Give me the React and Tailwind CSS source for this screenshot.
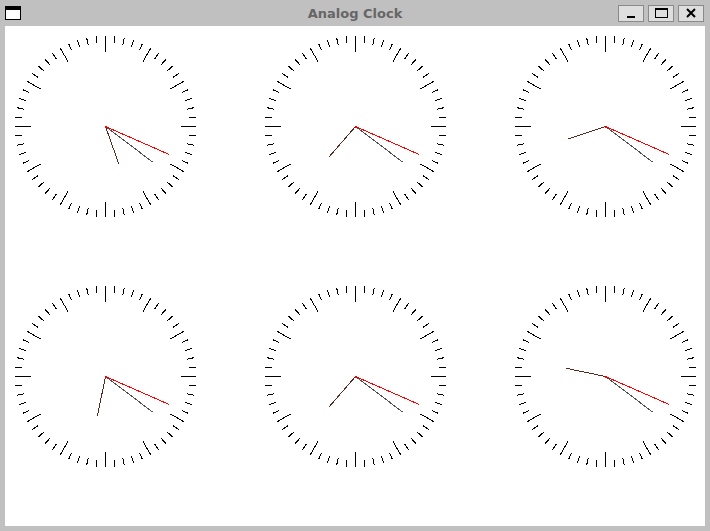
import React from "react";

const HOUR_ANGLES = [160.4, 221, 251.7, 191.6, 221, 281.8];

const C = 100.5;

function point(angle, r) {
  const rad = (angle * Math.PI) / 180;
  return [C + r * Math.sin(rad), C - r * Math.cos(rad)];
}

function Hand({ angle, length, color }) {
  const [x, y] = point(angle, length);
  return <line x1={C} y1={C} x2={x} y2={y} stroke={color} strokeWidth="1" />;
}

function Clock({ hour }) {
  const ticks = [];
  for (let i = 0; i < 60; i++) {
    const major = i % 5 === 0;
    const [x1, y1] = point(i * 6, major ? 75 : 83.5);
    const [x2, y2] = point(i * 6, 90.5);
    ticks.push(
      <line key={i} x1={x1} y1={y1} x2={x2} y2={y2} stroke="#000" strokeWidth="1" />
    );
  }
  return (
    <svg width="200" height="200" viewBox="0 0 200 200" shapeRendering="crispEdges">
      {ticks}
      <Hand angle={hour} length={40} color="#55291f" />
      <Hand angle={127} length={59} color="#505050" />
      <Hand angle={113.7} length={69} color="#ff0000" />
      <rect x="99.5" y="99.5" width="2" height="2" fill="#ff0000" />
    </svg>
  );
}

function TitleButton({ children }) {
  return (
    <div className="w-[26px] h-[17px] bg-[#dedede] border border-[#8a8a8a] flex items-center justify-center">
      {children}
    </div>
  );
}

export default function App() {
  return (
    <div className="w-[710px] h-[531px] bg-[#c0c0c0] flex flex-col" style={{ fontFamily: "'DejaVu Sans', sans-serif" }}>
      {/* Title bar */}
      <div className="h-[26px] grid grid-cols-[1fr_auto_1fr] items-center">
        <div className="pl-[5px] flex items-center">
          <div className="w-[16px] h-[14px] border border-black border-t-[4px] bg-white" />
        </div>
        <div className="text-[13px] font-bold text-[#666666] leading-none">Analog Clock</div>
        <div className="flex justify-end gap-[4px] pr-[6px]">
          <TitleButton>
            <div className="w-[8px] h-[2px] bg-black mt-[8px]" />
          </TitleButton>
          <TitleButton>
            <div className="w-[13px] h-[10px] border border-black border-t-[2px]" />
          </TitleButton>
          <TitleButton>
            <svg width="10" height="10" viewBox="0 0 10 10">
              <path d="M1 1 L9 9 M9 1 L1 9" stroke="#000" strokeWidth="2" />
            </svg>
          </TitleButton>
        </div>
      </div>
      {/* Clock area */}
      <div className="ml-[5px] w-[700px] h-[500px] bg-white grid grid-cols-[200px_200px_200px] gap-[50px] content-start">
        {HOUR_ANGLES.map((h, i) => (
          <Clock key={i} hour={h} />
        ))}
      </div>
    </div>
  );
}
